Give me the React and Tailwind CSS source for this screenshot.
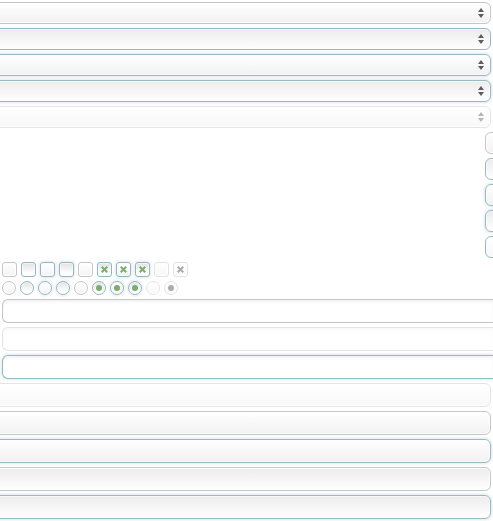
import React from "react";

const surface = {
  raised: "bg-linear-to-b from-white to-[#f1f1f1]",
  pressed: "bg-linear-to-b from-[#ececec] to-white",
};

const choiceSurface = {
  raised: "bg-linear-to-b from-white to-[#f3f3f3]",
  pressed: "bg-linear-to-b from-[#e2e2e2] to-white to-80%",
};

const outline = {
  gray: "border-[#c6c6c6] shadow-[inset_0_0_0_1px_#ffffff]",
  blue: "border-[#97bbc6] shadow-[inset_0_0_0_1px_#ffffff90]",
  glow: "border-[#97bbc6] shadow-[inset_0_0_0_1px_#ffffff90,0_0_3px_1px_#dfe8ea]",
};

const choiceOutline = {
  gray: "border-[#c6c6c6] shadow-[inset_0_0_0_1px_#ffffff]",
  blue: "border-[#93b7c2] shadow-[inset_0_0_0_1px_#ffffff90]",
  glow: "border-[#93b7c2] shadow-[inset_0_0_0_1px_#ffffff90,0_0_3px_1px_#e6e9ea]",
};

const wideSelects = [
  { name: "Normal", fill: "raised", line: "gray" },
  { name: "Hover", fill: "pressed", line: "blue" },
  { name: "Focus", fill: "raised", line: "glow" },
  { name: "Active", fill: "pressed", line: "glow" },
  { name: "Disabled", fill: "raised", line: "gray", disabled: true },
];

const listSelects = [
  { name: "Normal list", fill: "raised", line: "gray" },
  { name: "Hover list", fill: "pressed", line: "blue" },
  { name: "Focus list", fill: "raised", line: "glow" },
  { name: "Active list", fill: "pressed", line: "glow" },
  { name: "Selected list", fill: "raised", line: "blue", pale: true },
];

const choices = [
  { name: "Normal", fill: "raised", line: "gray" },
  { name: "Hover", fill: "pressed", line: "blue" },
  { name: "Focus", fill: "raised", line: "glow" },
  { name: "Active", fill: "pressed", line: "glow" },
  { name: "Plain", fill: "raised", line: "gray" },
  { name: "Checked", fill: "pressed", line: "blue", checked: true },
  { name: "Checked focus", fill: "raised", line: "glow", checked: true },
  { name: "Checked active", fill: "pressed", line: "glow", checked: true },
  { name: "Disabled", fill: "raised", line: "gray", disabled: true },
  { name: "Checked disabled", fill: "raised", line: "gray", checked: true, disabled: true },
];

const buttons = [
  { name: "Disabled button", fill: "raised", line: "gray", disabled: true },
  { name: "Normal button", fill: "raised", line: "gray" },
  { name: "Focus button", fill: "raised", line: "glow" },
  { name: "Pressed button", fill: "pressed", line: "gray" },
  { name: "Active button", fill: "pressed", line: "glow" },
];

function WideSelect({ name, fill, line, disabled }) {
  return (
    <div className={`mr-0.5 -ml-2 grid items-center ${disabled ? "opacity-45" : ""}`}>
      <select
        aria-label={name}
        disabled={disabled}
        className={`col-start-1 row-start-1 h-[22px] w-full appearance-none rounded-md border ${surface[fill]} ${outline[line]}`}
      />
      <svg
        aria-hidden="true"
        className="pointer-events-none col-start-1 row-start-1 mr-[7px] h-[10px] w-[6px] justify-self-end"
        viewBox="0 0 6 10"
        fill="#5c5c5c"
      >
        <path d="M3 0L6 4H0zM0 6h6L3 10z" />
      </svg>
    </div>
  );
}

function Choice({ type, name, fill, line, checked, disabled }) {
  const box = type === "checkbox";
  return (
    <span className={`grid place-items-center ${disabled ? "opacity-50" : ""}`}>
      <input
        type={type}
        aria-label={`${name} ${type}`}
        defaultChecked={checked}
        disabled={disabled}
        className={`col-start-1 row-start-1 appearance-none border ${box ? "size-[15px] rounded-[3px]" : "size-[14px] rounded-full"} ${choiceSurface[fill]} ${choiceOutline[line]}`}
      />
      {checked && (
        <svg
          aria-hidden="true"
          className={`pointer-events-none col-start-1 row-start-1 ${box ? "size-[7px]" : "size-[6px]"} ${disabled ? "text-[#5c5c5c]" : "text-[#7fab6d]"}`}
          viewBox={box ? "0 0 7 7" : "0 0 6 6"}
        >
          {box ? (
            <path d="M0.7 0.7L6.3 6.3M6.3 0.7L0.7 6.3" stroke="currentColor" strokeWidth="2" />
          ) : (
            <circle cx="3" cy="3" r="3" fill="currentColor" />
          )}
        </svg>
      )}
    </span>
  );
}

export default function App() {
  return (
    <main className="flex flex-col gap-1 overflow-hidden bg-white py-0.5 font-['Liberation_Sans',sans-serif] text-xs">
      {wideSelects.map((s) => (
        <WideSelect key={s.name} {...s} />
      ))}
      {listSelects.map((s) => (
        <select
          key={s.name}
          aria-label={s.name}
          className={`-mr-10 h-[22px] w-12 appearance-none self-end rounded-md border ${s.pale ? "bg-linear-to-b from-white to-[#f8f8f8]" : surface[s.fill]} ${outline[s.line]}`}
        />
      ))}
      <div className="flex gap-1 pl-0.5">
        {choices.map((c) => (
          <Choice key={c.name} type="checkbox" {...c} />
        ))}
      </div>
      <div className="flex gap-1 pl-0.5">
        {choices.map((c) => (
          <Choice key={c.name} type="radio" {...c} />
        ))}
      </div>
      <input
        type="text"
        aria-label="Normal text"
        className="ml-0.5 h-6 rounded-l-md border border-r-0 border-[#c6c6c6] bg-white shadow-[inset_0_2px_3px_#f2f2f2]"
      />
      <input
        type="text"
        aria-label="Disabled text"
        disabled
        className="ml-0.5 h-6 rounded-l-md border border-r-0 border-[#e4e4e4] bg-white shadow-[inset_0_2px_3px_#f9f9f9]"
      />
      <input
        type="text"
        aria-label="Focus text"
        className="ml-0.5 h-6 rounded-l-md border border-r-0 border-[#97bbc6] bg-white shadow-[inset_0_2px_3px_#f2f2f2,0_0_3px_1px_#dfe8ea]"
      />
      {buttons.map((b) => (
        <button
          key={b.name}
          type="button"
          aria-label={b.name}
          disabled={b.disabled}
          className={`mr-0.5 -ml-2 h-6 rounded-md border ${surface[b.fill]} ${outline[b.line]} ${b.disabled ? "opacity-45" : ""}`}
        />
      ))}
    </main>
  );
}
